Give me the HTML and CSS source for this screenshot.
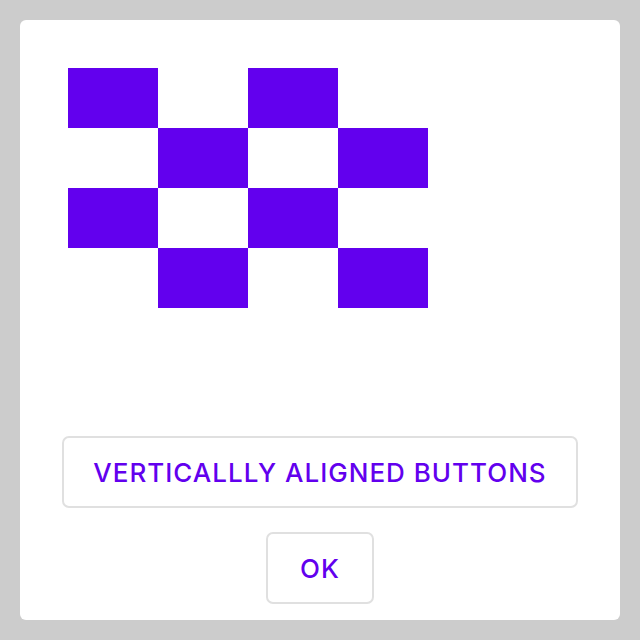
FILE: index.html
```html
<!DOCTYPE html>
<html>
<head>
<meta charset="utf-8">
<link rel="stylesheet" href="styles.css">
</head>
<body>
<div class="card">
  <div class="board">
    <div class="c on"></div><div class="c"></div><div class="c on"></div><div class="c"></div>
    <div class="c"></div><div class="c on"></div><div class="c"></div><div class="c on"></div>
    <div class="c on"></div><div class="c"></div><div class="c on"></div><div class="c"></div>
    <div class="c"></div><div class="c on"></div><div class="c"></div><div class="c on"></div>
  </div>
  <div class="spacer"></div>
  <div class="actions">
    <button class="btn wide">VERTICALLLY ALIGNED BUTTONS</button>
    <button class="btn">OK</button>
  </div>
</div>
</body>
</html>
```
FILE: styles.css
```css
html, body {
  margin: 0;
  padding: 0;
  background: #cccccc;
}
body {
  padding: 20px;
  width: 640px;
  height: 640px;
  box-sizing: border-box;
}
.card {
  background: #fff;
  border-radius: 6px;
  width: 600px;
  height: 600px;
  box-sizing: border-box;
  padding: 48px 42px 16px;
  display: flex;
  flex-direction: column;
}
.board {
  margin-left: 6px;
  display: grid;
  grid-template-columns: repeat(4, 90px);
  grid-template-rows: repeat(4, 60px);
}
.c.on {
  background: #6200ee;
}
.spacer {
  flex: 1;
}
.actions {
  display: flex;
  flex-direction: column;
  align-items: center;
  gap: 24px;
}
.btn {
  font-family: Inter, "Noto Sans", sans-serif;
  font-size: 26px;
  font-weight: 500;
  letter-spacing: 1px;
  white-space: nowrap;
  color: #6200ee;
  background: #fff;
  border: 2px solid #e0e0e0;
  border-radius: 7px;
  height: 72px;
  padding: 0 32px;
  box-sizing: border-box;
}
.btn.wide {
  align-self: stretch;
  padding: 0 16px;
}
```
